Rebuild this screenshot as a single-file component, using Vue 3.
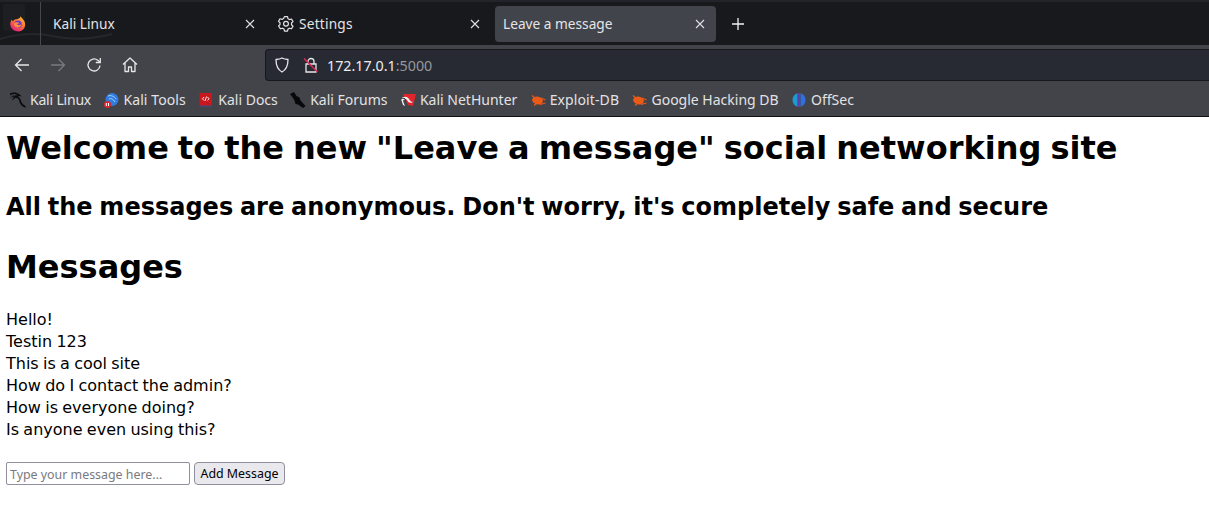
<script setup>
const tabs = [
  { label: 'Kali Linux', icon: false, active: false },
  { label: 'Settings', icon: true, active: false },
  { label: 'Leave a message', icon: false, active: true },
]
const bookmarks = [
  { label: 'Kali Linux', icon: 'dragon' },
  { label: 'Kali Tools', icon: 'tools' },
  { label: 'Kali Docs', icon: 'docs' },
  { label: 'Kali Forums', icon: 'forums' },
  { label: 'Kali NetHunter', icon: 'hunter' },
  { label: 'Exploit-DB', icon: 'bug' },
  { label: 'Google Hacking DB', icon: 'bug' },
  { label: 'OffSec', icon: 'offsec' },
]
const messages = [
  'Hello!',
  'Testin 123',
  'This is a cool site',
  'How do I contact the admin?',
  'How is everyone doing?',
  'Is anyone even using this?',
]
</script>

<template>
  <div class="page">
    <header class="browser">
      <div class="tabbar">
        <svg class="deco" viewBox="0 0 160 43" width="160" height="43" fill="none" stroke="#26272c" stroke-width="2">
          <path d="M0 37C20 31 40 31 52 34C70 38 90 38 112 32" />
        </svg>
        <div class="fx-cell">
          <svg class="fx" viewBox="0 0 16 16" width="16" height="16">
            <defs>
              <linearGradient id="fxg" x1="0.800" y1="0" x2="0.200" y2="1">
                <stop offset="0" stop-color="#ffc02e" />
                <stop offset="0.500" stop-color="#ff6a36" />
                <stop offset="1" stop-color="#e31587" />
              </linearGradient>
            </defs>
            <path d="M10.500 0c.4 1.600 2.800 3 3.900 5.200 1.300 2.800.9 5.500-.8 7.700A7.800 7.800 0 0 1 .2 8.500C.1 6.600 .8 4.800 1.900 3.400c.1.900.5 1.500 1 1.800C4 3.600 6 3 7.500 2.900 9.300 2.700 10.700 1.700 10.500 0z" fill="url(#fxg)" />
            <circle cx="8" cy="8.200" r="3.700" fill="#6a35c9" />
            <path d="M3.900 7.200c1.500-1.500 4.500-1.300 6 .3-1.300-.1-2.500.2-2.600 1 .8.800 2.900.6 3.900.1-.2 1.800-1.700 3.200-3.500 3.100-2.300-.1-4.100-2-3.800-4.500z" fill="#ff8a3c" />
          </svg>
        </div>
        <div
          v-for="tab in tabs"
          :key="tab.label"
          class="tab"
          :class="{ active: tab.active }"
        >
          <svg v-if="tab.icon" class="gear" viewBox="0 0 16 16" width="16" height="16" fill="none" stroke="#e4e4e6" stroke-width="1.200" stroke-linejoin="round">
            <path d="M6.500 .7h3l.5 2 1.500.9 2-.6 1.500 2.600-1.500 1.400v1.800l1.500 1.400-1.500 2.600-2-.6-1.500.9-.5 2h-3l-.5-2-1.500-.9-2 .6L.5 10l1.500-1.400V6.800L.5 5.400 2 2.800l2 .6 1.500-.9z" />
            <circle cx="8" cy="7.700" r="2.400" />
          </svg>
          <span class="tab-label">{{ tab.label }}</span>
          <svg class="close" viewBox="0 0 10 10" width="10" height="10" stroke="#e0e0e2" stroke-width="1.100" fill="none">
            <path d="M1 1l8 8M9 1l-8 8" />
          </svg>
        </div>
        <svg class="plus" viewBox="0 0 12 12" width="12" height="12" stroke="#f2f2f3" stroke-width="1.300" fill="none">
          <path d="M6 0v12M0 6h12" />
        </svg>
      </div>

      <div class="toolbar">
        <div class="nav">
          <svg viewBox="0 0 16 16" width="16" height="16" fill="none" stroke="#e6e6e8" stroke-width="1.300">
            <path d="M15 8H1.500M7.500 2l-6 6 6 6" />
          </svg>
          <svg viewBox="0 0 16 16" width="16" height="16" fill="none" stroke="#77797e" stroke-width="1.300">
            <path d="M1 8h13.500M8.500 2l6 6-6 6" />
          </svg>
          <svg viewBox="0 0 16 16" width="16" height="16" fill="none" stroke="#e6e6e8" stroke-width="1.300">
            <path d="M14 8.500A6 6 0 1 1 11.800 3.300L14 5.200" />
            <path d="M14.300 1v4.500H9.800" />
          </svg>
          <svg viewBox="0 0 16 16" width="16" height="16" fill="none" stroke="#e6e6e8" stroke-width="1.300" stroke-linejoin="round">
            <path d="M1 7.500 8 1l7 6.500M3 6v8.500h3.500v-4.500h3v4.500H13V6" />
          </svg>
        </div>
        <div class="urlbar">
          <svg viewBox="0 0 16 16" width="16" height="16" fill="none" stroke="#e6e6e8" stroke-width="1.300" stroke-linejoin="round">
            <path d="M8 1c2 1 4 1.300 6 1.500 0 5.500-1.500 10-6 12.500C3.500 12.500 2 8 2 2.500 4 2.300 6 2 8 1z" />
          </svg>
          <svg class="lock" viewBox="0 0 16 16" width="16" height="16" fill="none" stroke-width="1.300">
            <path d="M5 7V4.500a3 3 0 0 1 6 0V7M3 7h10v8H3z" stroke="#e6e6e8" />
            <path d="M1 1.500l13.500 13.500" stroke="#e22850" stroke-width="1.500" />
          </svg>
          <span class="url"><span class="host">172.17.0.1</span><span class="port">:5000</span></span>
        </div>
      </div>

      <div class="bookmarks">
        <div v-for="b in bookmarks" :key="b.label" class="bookmark">
          <svg class="bm-icon" viewBox="0 0 16 16" width="16" height="16">
            <template v-if="b.icon === 'dragon'">
              <path d="M0 2.500C3 .5 7 1 9.500 3.500 7.500 3.500 5.500 3.500 4.500 5c2.500-.5 5 1 5.500 3.500.4 2.500 1.700 4.500 5.500 6.500" fill="none" stroke="#0b0b0d" stroke-width="1.700" />
              <path d="M1 5.500c1-1.300 2-1.500 3.500-1.500M2 8c1-1 2-1.500 3-1.500" fill="none" stroke="#0b0b0d" stroke-width="1" />
            </template>
            <template v-else-if="b.icon === 'tools'">
              <circle cx="9" cy="7.500" r="6.500" fill="#2f7de1" />
              <path d="M5 4c3-1 6 0 8 3M6 7c2-1 4 0 6 3" stroke="#cfe3fb" stroke-width="0.800" fill="none" />
              <rect x="1" y="9" width="7" height="7" rx="3.500" fill="#d9262c" />
              <path d="M3.300 11v3M5.500 11v3" stroke="#fff" stroke-width="1" />
            </template>
            <template v-else-if="b.icon === 'docs'">
              <path d="M1.500 1H14v14H3.500a2 2 0 0 1-2-2z" fill="#c9171e" />
              <rect x="1.500" y="13.500" width="12.500" height="1.500" fill="#3d4a78" />
              <path d="M6 5L4.500 6.800 6 8.500M9.500 5 11 6.800 9.500 8.500M8.500 4.500 7 9" stroke="#fff" stroke-width="0.900" fill="none" />
            </template>
            <template v-else-if="b.icon === 'forums'">
              <path d="M0 2 4 0l2.500 4 3 1.500 1 3 5 5.500-2.500 2-5-3.500-2.500-.5-1-3.500L3 6z" fill="#08080a" />
            </template>
            <template v-else-if="b.icon === 'hunter'">
              <path d="M3 2h13l-3 12-5-1z" fill="#e2242c" />
              <path d="M1 7c2-3 6-3 8 0 1 2 2 3 4 3-3 2-5 0-6-2-1-1-3-1-4 1l2 5-2-1z" fill="#f1f1f1" />
              <path d="M1 7c2-1 4-1 5 1" stroke="#222" stroke-width="1" fill="none" />
            </template>
            <template v-else-if="b.icon === 'bug'">
              <ellipse cx="7.500" cy="8.500" rx="5.500" ry="3.800" fill="#ec5a17" transform="rotate(14 7.500 8.500)" />
              <path d="M2 3.500l4 3.500M10 12.500l5.500-1.500M11 6l4.500 2M4 13.500l3-2.500" stroke="#ec5a17" stroke-width="1.100" />
            </template>
            <template v-else>
              <path d="M6.500 1.300A7 7 0 0 0 6.500 14.700z" fill="#1b9bd1" />
              <path d="M9.500 1.300A7 7 0 0 1 9.500 14.700z" fill="#2f6fe0" />
              <path d="M8 1v14" stroke="#6a3fd0" stroke-width="1.400" />
            </template>
          </svg>
          <span class="bm-label">{{ b.label }}</span>
        </div>
      </div>
    </header>

    <main class="content">
      <h1>Welcome to the new "Leave a message" social networking site</h1>
      <h2>All the messages are anonymous. Don't worry, it's completely safe and secure</h2>
      <h1 class="messages-title">Messages</h1>
      <ul class="messages">
        <li v-for="m in messages" :key="m">{{ m }}</li>
      </ul>
      <form class="composer" @submit.prevent>
        <input type="text" placeholder="Type your message here..." />
        <button type="submit">Add Message</button>
      </form>
    </main>
  </div>
</template>

<style>
html, body { margin: 0; background: #fff; overflow: hidden; }
</style>

<style scoped>
.page { width: 1209px; height: 518px; overflow: hidden; background: #fff; }
.browser { font-family: "Noto Sans", "Open Sans", sans-serif; font-size: 14px; color: #e4e4e6; }
.tabbar {
  position: relative;
  height: 43px;
  background: #18191c;
  border-top: 2px solid #22242a;
  display: flex;
  align-items: center;
  gap: 4px;
}
.deco { position: absolute; left: 0; top: 0; pointer-events: none; }
.fx-cell {
  position: relative;
  width: 41px;
  height: 43px;
  box-sizing: border-box;
  border-right: 1px solid #45474d;
  padding-left: 10px;
  flex: none;
  display: flex;
  align-items: center;
}
.fx-cell::before {
  content: "";
  position: absolute;
  left: 3px;
  top: 2px;
  width: 22px;
  height: 27px;
  background: #1e1f23;
  border-radius: 3px;
}
.fx { position: relative; display: block; }
.tab {
  position: relative;
  width: 221px;
  height: 36px;
  padding: 0 11px 0 8px;
  box-sizing: border-box;
  display: flex;
  align-items: center;
  border-radius: 4px;
  flex: none;
}
.gear { margin-right: 5px; flex: none; }
.tab-label { flex: 1; white-space: nowrap; font-size: 13.7px; }
.gear + .tab-label { letter-spacing: 0.2px; }
.close { flex: none; }
.tab.active { background: #42444b; }
.plus { margin-left: 12px; }
.toolbar {
  height: 36px;
  padding-top: 4px;
  box-sizing: border-box;
  background: #42444a;
  display: flex;
  align-items: center;
}
.nav {
  width: 265px;
  flex: none;
  display: flex;
  align-items: center;
  gap: 20px;
  padding-left: 14px;
  box-sizing: border-box;
}
.urlbar {
  flex: 1;
  height: 32px;
  background: #272a33;
  border: 1px solid #17181b;
  border-right: 0;
  border-radius: 4px 0 0 4px;
  display: flex;
  align-items: center;
  gap: 6px;
  padding-left: 8px;
  box-sizing: border-box;
}
.lock { margin-left: 7px; }
.url { margin-left: 2px; font-size: 14.3px; }
.host { color: #ecedef; }
.port { color: #96979c; }
.bookmarks {
  height: 36px;
  background: #42444a;
  border-bottom: 1px solid #111214;
  box-sizing: border-box;
  display: flex;
  align-items: center;
  padding: 2px 0 0 10px;
  gap: 12.4px;
}
.bookmark { display: flex; align-items: center; gap: 4px; white-space: nowrap; }
.bookmark:nth-child(1) .bm-label { letter-spacing: -0.2px; }
.bookmark:nth-child(2) .bm-label { letter-spacing: 0.1px; }
.bookmark:nth-child(6) .bm-label { letter-spacing: 0.1px; }
.bm-icon { flex: none; }
.bm-label { color: #e2e2e4; }
.content {
  font-family: "DejaVu Sans", sans-serif;
  color: #000;
  padding: 0 6px;
}
h1 { font-size: 32px; margin: 0; padding-top: 11px; line-height: 40px; font-weight: 700; word-spacing: -2.1px; }
h2 { font-size: 24px; margin: 0; padding-top: 23px; line-height: 32px; font-weight: 700; word-spacing: -1.6px; }
.messages-title { padding-top: 24px; }
.messages { list-style: none; margin: 22px 0 0; padding: 0; font-size: 16px; line-height: 22px; word-spacing: -0.8px; }
.composer { margin-top: 21px; display: flex; align-items: center; gap: 4px; }
input {
  width: 184px;
  height: 23px;
  box-sizing: border-box;
  font-family: "Noto Sans", sans-serif;
  font-size: 12.4px;
  padding: 2px 3px 0;
  border: 1px solid #8f8f9d;
  border-radius: 2px;
  background: #fff;
}
input::placeholder { color: #7a7a80; opacity: 1; }
button {
  height: 23px;
  width: 91px;
  box-sizing: border-box;
  font-family: "Noto Sans", sans-serif;
  font-size: 12.4px;
  padding: 0;
  color: #000;
  background: #e9e9ed;
  border: 1px solid #8f8f9d;
  border-radius: 4px;
}
</style>
